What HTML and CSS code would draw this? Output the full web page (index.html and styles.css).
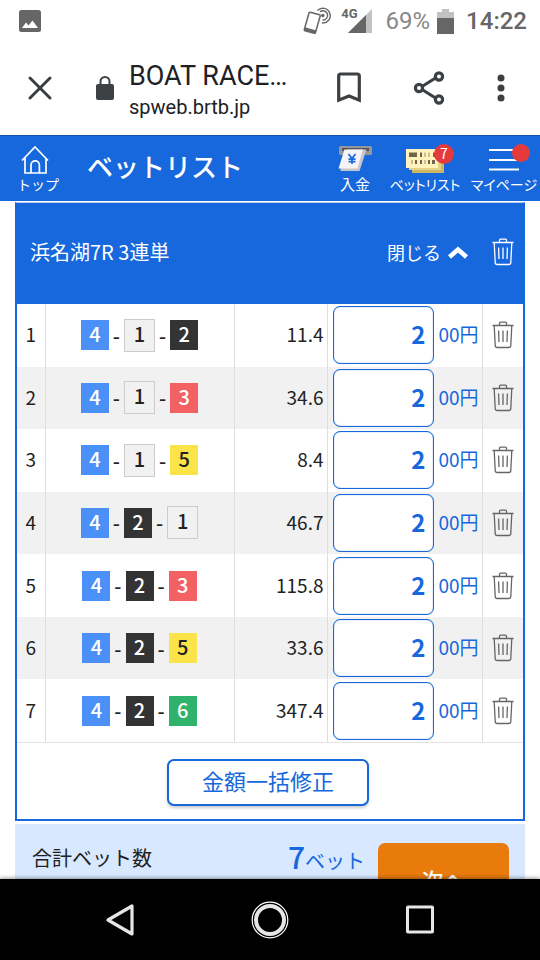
FILE: index.html
```html
<!DOCTYPE html>
<html lang="ja">
<head>
<meta charset="utf-8">
<meta name="viewport" content="width=device-width, initial-scale=1">
<title>ベットリスト</title>
<link rel="stylesheet" href="styles.css">
</head>
<body>
<svg class="defs" aria-hidden="true">
  <symbol id="trash" viewBox="0 0 22 28">
    <path d="M0.5 4.5H21.5M7.5 4.5V2.2Q7.5 1.2 8.5 1.2H13.5Q14.5 1.2 14.5 2.2V4.5M2.2 4.5L3.2 24.5Q3.3 26.5 5.2 26.5H16.8Q18.7 26.5 18.8 24.5L19.8 4.5M6.6 9.5L7 21M11 9.5V21M15.4 9.5L15 21" fill="none" stroke="currentColor" stroke-width="1.3"/>
  </symbol>
</svg>

<div class="status">
  <svg class="status-photo" viewBox="0 0 22 22" width="22" height="22"><rect width="22" height="22" rx="2.5" fill="#666"/><path d="M3 18L7 12.5L9.5 15.5L13.5 10.5L19 18Z" fill="#fff"/></svg>
  <svg class="status-nfc" viewBox="0 0 30 30" width="30" height="30" fill="none" stroke="#666"><path d="M7.2 6.2L16.5 8.8Q17.4 9.1 17.2 10L12.5 26.5Q12.2 27.5 11.2 27.2L2 24.7Q1 24.4 1.3 23.5L6 7Q6.3 6 7.2 6.2Z" stroke-width="1.5"/><path d="M1.5 22.8L13 26" stroke-width="3"/><circle cx="19.8" cy="9.5" r="1.7" fill="#666" stroke="none"/><path d="M17 6A4.6 4.6 0 1 1 19.5 14M14.5 4.5A7.4 7.4 0 1 1 19 17" stroke-width="1.4"/></svg>
  <span class="net">4G</span>
  <svg class="status-signal" viewBox="0 0 24 24" width="24" height="24"><path d="M24 0V24H0Z" fill="#c2c2c2"/><path d="M18 6V24H0Z" fill="#666"/></svg>
  <span class="percent">69%</span>
  <svg class="status-battery" viewBox="0 0 17 25" width="17" height="25"><path d="M5 0H12V3H17V10H0V3H5Z" fill="#c2c2c2"/><path d="M0 9H17V25H0Z" fill="#666"/></svg>
  <span class="clock">14:22</span>
</div>

<div class="browser">
  <button class="tool close" type="button" aria-label="閉じる"><svg viewBox="0 0 24 24" width="24" height="24"><path d="M2 2L22 22M22 2L2 22" stroke="#3c4043" stroke-width="3" stroke-linecap="round"/></svg></button>
  <svg class="lock" viewBox="0 0 18 24" width="18" height="24"><rect y="8" width="18" height="16" rx="2" fill="#3c4043"/><path d="M4.5 9V5.5A4.5 4.5 0 0 1 13.5 5.5V9" fill="none" stroke="#3c4043" stroke-width="2"/></svg>
  <div class="address">
    <div class="site">BOAT RACE…</div>
    <div class="url">spweb.brtb.jp</div>
  </div>
  <button class="tool" type="button" aria-label="ブックマーク"><svg viewBox="0 0 24 31" width="24" height="31"><path d="M1.7 28.2V4Q1.7 2 3.7 2H20.3Q22.3 2 22.3 4V28.2L12 24Z" fill="none" stroke="#3c4043" stroke-width="3.2"/></svg></button>
  <button class="tool share" type="button" aria-label="共有"><svg viewBox="0 0 32 34" width="32" height="34" fill="none" stroke="#3c4043" stroke-width="3.2"><path d="M9 15.5L22.5 7M9 18.5L22.5 27"/><circle cx="6" cy="17" r="3.6"/><circle cx="26" cy="5.5" r="3.6"/><circle cx="26" cy="28.5" r="3.6"/></svg></button>
  <button class="tool more" type="button" aria-label="メニュー"><svg viewBox="0 0 8 28" width="8" height="28" fill="#3c4043"><circle cx="4" cy="4" r="3.5"/><circle cx="4" cy="14" r="3.5"/><circle cx="4" cy="24" r="3.5"/></svg></button>
</div>

<header class="app">
  <a class="nav home" href="#"><svg viewBox="0 0 30 30" width="30" height="30" fill="none" stroke="#fff" stroke-width="1.7"><path d="M2 15.5L15 2L28 15.5M5 13V28H26V13M11 28V20A4.2 4.2 0 0 1 19.4 20V28"/></svg><span>トップ</span></a>
  <h1>ベットリスト</h1>
  <a class="nav deposit" href="#"><svg viewBox="0 0 34 30" width="34" height="30"><rect x="1" y="1" width="33" height="9" rx="1.5" fill="#97979b"/><rect x="4" y="3" width="27" height="3" fill="#55555c"/><path d="M10 4.500H28.500L21.500 26H2.500V22Z" fill="#c6c6ca"/><path d="M6.500 4.500H25L19.500 23.500H0.500Z" fill="#f4f4f6"/><path d="M10.500 9L14 13.500L17.500 9M14 13.500V19M10.500 14.200H17.500M10.500 16.700H17.500" fill="none" stroke="#1768dc" stroke-width="1.700"/></svg><span>入金</span></a>
  <a class="nav bets" href="#"><svg viewBox="0 0 38 30" width="38" height="30"><path d="M6 10H38V28H6Z" fill="#cdb765"/><path d="M3 8H35V25H3Z" fill="#e5d487"/><path d="M0 4H32V23H0Z" fill="#fff2bd"/><path d="M3 7.500H11V12H3ZM14 7.500H16V12H14ZM27 7.500H29V12H27ZM9 15H11V19H9ZM14 15H16V19H14ZM22 15H24V19H22ZM26 15H29V19H26Z" fill="#71664b"/><path d="M18 7.500H20V12H18ZM22 7.500H24V12H22ZM5 15H7V19H5ZM18 15H20V19H18Z" fill="#cfc28f"/></svg><span>ベットリスト</span><b class="badge">7</b></a>
  <a class="nav mypage" href="#"><svg viewBox="0 0 30 30" width="30" height="30"><path d="M0 5H30M0 15H30M0 24.500H30" stroke="#fff" stroke-width="2"/></svg><span>マイページ</span><b class="badge dot"></b></a>
</header>

<main>
  <section class="race">
    <div class="race-head">
      <h2>浜名湖7R 3連単</h2>
      <button class="fold" type="button">閉じる<svg viewBox="0 0 20 14" width="20" height="14"><path d="M1.500 12L10 4.500L18.500 12" fill="none" stroke="#fff" stroke-width="4.500"/></svg></button>
      <button class="remove" type="button" aria-label="すべて削除"><svg width="22" height="28"><use href="#trash"/></svg></button>
    </div>
    <table>
      <colgroup><col class="c-no"><col><col class="c-odds"><col class="c-amount"><col class="c-del"></colgroup>
      <tbody>
        <tr><td class="no">1</td><td><div class="combo"><i class="n4">4</i>-<i class="n1">1</i>-<i class="n2">2</i></div></td><td class="odds">11.4</td><td><label class="amount"><input type="text" value="2"><span>00円</span></label></td><td><button class="remove" type="button" aria-label="1を削除"><svg width="22" height="28"><use href="#trash"/></svg></button></td></tr>
        <tr><td class="no">2</td><td><div class="combo"><i class="n4">4</i>-<i class="n1">1</i>-<i class="n3">3</i></div></td><td class="odds">34.6</td><td><label class="amount"><input type="text" value="2"><span>00円</span></label></td><td><button class="remove" type="button" aria-label="2を削除"><svg width="22" height="28"><use href="#trash"/></svg></button></td></tr>
        <tr><td class="no">3</td><td><div class="combo"><i class="n4">4</i>-<i class="n1">1</i>-<i class="n5">5</i></div></td><td class="odds">8.4</td><td><label class="amount"><input type="text" value="2"><span>00円</span></label></td><td><button class="remove" type="button" aria-label="3を削除"><svg width="22" height="28"><use href="#trash"/></svg></button></td></tr>
        <tr><td class="no">4</td><td><div class="combo"><i class="n4">4</i>-<i class="n2">2</i>-<i class="n1">1</i></div></td><td class="odds">46.7</td><td><label class="amount"><input type="text" value="2"><span>00円</span></label></td><td><button class="remove" type="button" aria-label="4を削除"><svg width="22" height="28"><use href="#trash"/></svg></button></td></tr>
        <tr><td class="no">5</td><td><div class="combo"><i class="n4">4</i>-<i class="n2">2</i>-<i class="n3">3</i></div></td><td class="odds">115.8</td><td><label class="amount"><input type="text" value="2"><span>00円</span></label></td><td><button class="remove" type="button" aria-label="5を削除"><svg width="22" height="28"><use href="#trash"/></svg></button></td></tr>
        <tr><td class="no">6</td><td><div class="combo"><i class="n4">4</i>-<i class="n2">2</i>-<i class="n5">5</i></div></td><td class="odds">33.6</td><td><label class="amount"><input type="text" value="2"><span>00円</span></label></td><td><button class="remove" type="button" aria-label="6を削除"><svg width="22" height="28"><use href="#trash"/></svg></button></td></tr>
        <tr><td class="no">7</td><td><div class="combo"><i class="n4">4</i>-<i class="n2">2</i>-<i class="n6">6</i></div></td><td class="odds">347.4</td><td><label class="amount"><input type="text" value="2"><span>00円</span></label></td><td><button class="remove" type="button" aria-label="7を削除"><svg width="22" height="28"><use href="#trash"/></svg></button></td></tr>
      </tbody>
    </table>
    <div class="bulk"><button type="button">金額一括修正</button></div>
  </section>
  <section class="total">
    <span class="total-label">合計ベット数</span>
    <span class="total-count"><b>7</b>ベット</span>
    <button class="next" type="button">次へ</button>
  </section>
</main>

<nav class="system">
  <button type="button" aria-label="戻る"><svg viewBox="0 0 38 38" width="38" height="38"><path d="M31 5V33L7 19Z" fill="none" stroke="#e6e6e6" stroke-width="3.200" stroke-linejoin="round"/></svg></button>
  <button type="button" aria-label="ホーム"><svg viewBox="0 0 38 38" width="38" height="38" fill="none"><circle cx="19" cy="19" r="17.800" stroke="#fff" stroke-width="1.200"/><circle cx="19" cy="19" r="14" stroke="#e6e6e6" stroke-width="4"/></svg></button>
  <button type="button" aria-label="履歴"><svg viewBox="0 0 38 38" width="38" height="38"><rect x="6.500" y="6" width="25" height="25" rx="0.500" fill="none" stroke="#e6e6e6" stroke-width="3"/></svg></button>
</nav>
</body>
</html>
```
FILE: styles.css
```css
* { box-sizing: border-box; }

body {
  margin: 0;
  height: 100vh;
  display: flex;
  flex-direction: column;
  background: #fff;
  color: #222;
  font-family: "Noto Sans CJK JP", sans-serif;
  font-size: 19px;
}

.defs { position: absolute; width: 0; height: 0; }

button {
  margin: 0;
  padding: 0;
  border: 0;
  background: none;
  color: inherit;
  font: inherit;
}

svg { display: block; flex: none; }

h1, h2 { margin: 0; }

/* Status bar */
.status {
  flex: none;
  height: 40px;
  display: flex;
  align-items: center;
  padding: 2px 13px 0 19px;
  color: #666;
  font-family: Roboto, sans-serif;
  font-size: 24px;
  font-weight: 500;
}
.status-photo { margin-right: auto; }
.net { font-size: 13px; font-weight: 700; align-self: flex-start; line-height: 24px; margin-left: 8px; }
.status-signal { margin-left: -10px; }
.percent { margin-left: 14px; color: #888; font-weight: 400; }
.status-battery { margin: 0 12px 0 7px; }

/* Browser bar */
.browser {
  flex: none;
  height: 95px;
  display: flex;
  align-items: center;
  padding: 0 35px 0 28px;
  font-family: Roboto, sans-serif;
  color: #202124;
}
.lock { margin: 0 15px 0 44px; }
.address { flex: 1; padding-top: 6px; }
.site { font-size: 27px; line-height: 32px; }
.url { font-size: 20px; line-height: 30px; }
.share { margin: 0 52px; }

/* App header */
.app {
  flex: none;
  height: 66px;
  display: flex;
  align-items: center;
  background: #1768dc;
  border-top: 1px solid #14539f;
  color: #fff;
}
.app h1 {
  flex: 1;
  font-size: 26px;
  font-weight: 500;
  line-height: 60px;
  padding: 0 0 6px 16px;
  white-space: nowrap;
}
.nav {
  position: relative;
  display: flex;
  flex-direction: column;
  align-items: center;
  color: inherit;
  text-decoration: none;
  font-size: 14px;
  line-height: 18px;
  white-space: nowrap;
  font-feature-settings: "palt";
}
.home { width: 66px; margin-left: 5px; font-feature-settings: normal; }
.home svg { margin-right: 6px; }
.deposit { width: 54px; font-size: 15px; }
.bets { width: 86px; }
.mypage { width: 72px; }
.badge {
  position: absolute;
  top: -1px;
  right: 14px;
  width: 20px;
  height: 20px;
  border-radius: 50%;
  background: #e53a3c;
  font-size: 14px;
  font-weight: 400;
  line-height: 19px;
  text-align: center;
}
.dot { width: 18px; height: 18px; right: 10px; }

/* Bet list */
main {
  flex: 1;
  min-height: 0;
  overflow: hidden auto;
  scrollbar-width: none;
  padding: 1px 15px 0;
}
.race {
  border: 2px solid #1768dc;
  border-top: 1px solid #b9d0f4;
}
.race-head {
  height: 101px;
  display: flex;
  align-items: center;
  padding: 0 0 4px 13px;
  background: #1768dc;
  color: #fff;
}
.race-head h2 { flex: 1; font-size: 20px; font-weight: 400; }
.fold { display: flex; align-items: center; gap: 7px; margin-right: 14px; font-size: 18px; }
.remove { display: flex; justify-content: center; width: 41px; }
table {
  width: 100%;
  height: 439px;
  table-layout: fixed;
  border-collapse: collapse;
  border-bottom: 1px solid #e4e4e4;
}
.c-no { width: 28px; }
.c-odds { width: 93px; }
.c-amount { width: 155px; }
.c-del { width: 41px; }
td { padding: 0; text-align: center; border-left: 1px solid #dedede; }
td:first-child { border-left: 0; }
tr:nth-child(even) { background: #f1f1f1; }
td .remove { color: #666; }
.combo { display: flex; align-items: center; justify-content: center; gap: 4px; font-weight: 500; font-size: 20px; }
.combo i {
  width: 28px;
  height: 30px;
  font-style: normal;
  line-height: 28px;
  color: #fff;
}
.combo .n1 { width: 31px; height: 33px; border: 1px solid #ccc; background: #f1f1f1; color: #222; }
.combo .n2 { background: #333; }
.combo .n3 { background: #f26163; }
.combo .n4 { background: #4a90f7; }
.combo .n5 { background: #fae44a; color: #222; }
.combo .n6 { background: #2fb26c; }
.no, .odds { padding-bottom: 3px; }
.odds { text-align: right; padding-right: 3px; }
.amount { display: flex; align-items: center; gap: 5px; padding-left: 5px; color: #1768dc; }
.amount span { padding-bottom: 3px; }
.amount input {
  width: 101px;
  height: 58px;
  padding: 0 7px 3px;
  border: 1px solid #1768dc;
  box-shadow: inset 0 0 1px #1768dc;
  border-radius: 7px;
  background: #fff;
  color: inherit;
  font: inherit;
  font-size: 24px;
  font-weight: 700;
  text-align: right;
}
.bulk { display: flex; justify-content: center; padding: 16px 4px 13px 0; }
.bulk button {
  width: 202px;
  height: 47px;
  padding-bottom: 5px;
  border: 2px solid #1768dc;
  border-radius: 7px;
  box-shadow: 0 2px 3px #0003;
  background: #fff;
  color: #1768dc;
  font-size: 22px;
  line-height: 36px;
}

/* Totals */
.total {
  display: flex;
  align-items: flex-start;
  margin-top: 3px;
  padding: 19px 16px 18px 17px;
  background: #d8e8ff;
  font-size: 20px;
  line-height: 30px;
}
.total-label { flex: 1; }
.total-count { color: #1768dc; margin-right: 13px; line-height: 26px; }
.total-count b { font-size: 30px; font-weight: 500; }
.next {
  width: 131px;
  height: 72px;
  border-radius: 7px;
  background: #e87b0c;
  color: #fff;
  font-size: 22px;
  font-weight: 500;
}

/* System navigation */
.system {
  position: relative;
  flex: none;
  height: 81px;
  display: flex;
  align-items: center;
  justify-content: center;
  gap: 112px;
  background: #000;
  box-shadow: 0 -1px 4px #0006;
}
```
